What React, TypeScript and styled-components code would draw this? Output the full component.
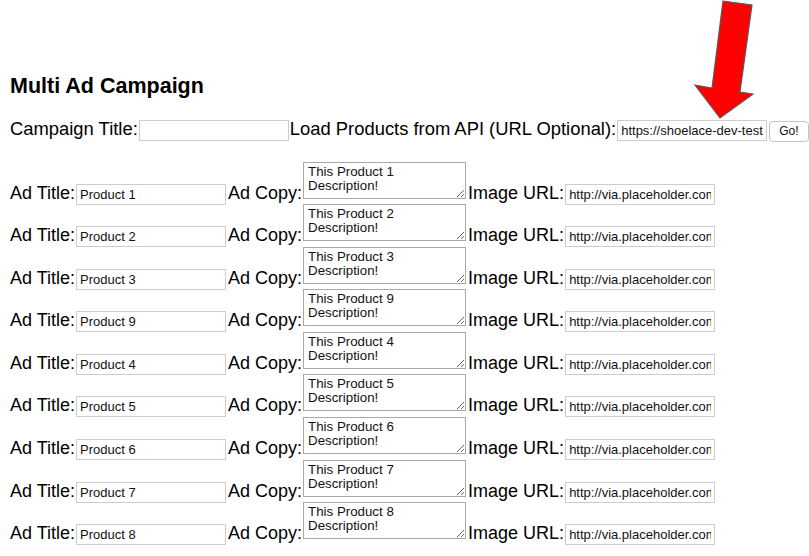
import React from 'react'
import styled, { createGlobalStyle } from 'styled-components'

const GlobalStyle = createGlobalStyle`
  html, body {
    margin: 0;
    padding: 0;
    background: #ffffff;
  }
  body {
    font-family: "Liberation Sans", Arial, Helvetica, sans-serif;
    color: #000000;
  }
`

const Page = styled.div`
  position: relative;
  width: 809px;
  height: 556px;
  overflow: hidden;
  padding: 73px 0 0 10px;
  box-sizing: border-box;
`

const Heading = styled.h3`
  margin: 0;
  font-size: 21.5px;
  line-height: 26px;
  font-weight: bold;
`

const TopRow = styled.div`
  margin-top: 19px;
  font-size: 18.4px;
  white-space: nowrap;
`

const AdList = styled.div`
  margin-top: 20px;
`

const AdRow = styled.div`
  height: 42.6px;
  font-size: 18px;
  white-space: nowrap;
`

const TextInput = styled.input<{ $gap?: number }>`
  box-sizing: border-box;
  width: 150px;
  height: 21px;
  margin: 0 ${(p) => p.$gap ?? 2}px 0 1px;
  padding: 0 3px;
  border: 1px solid #cdcdcd;
  font-family: "Liberation Sans", Arial, Helvetica, sans-serif;
  font-size: 13px;
  color: #111;
  background: #fff;
  outline: none;
  vertical-align: baseline;
`

const CopyArea = styled.textarea`
  box-sizing: border-box;
  width: 163px;
  height: 37px;
  margin: 0 2px 0 1px;
  padding: 2px 4px;
  border: 1px solid #a9a9a9;
  font-family: "Liberation Sans", Arial, Helvetica, sans-serif;
  font-size: 13.3px;
  line-height: 14px;
  color: #111;
  background: #fff;
  overflow: hidden;
  vertical-align: baseline;
`

const GoButton = styled.button`
  box-sizing: border-box;
  height: 21px;
  margin-left: 1px;
  padding: 0 9px;
  border: 1px solid #c4c4c4;
  border-radius: 4px;
  background: #fff;
  font-family: "Liberation Sans", Arial, Helvetica, sans-serif;
  font-size: 12px;
  color: #111;
  vertical-align: baseline;
`

const Arrow = styled.svg`
  position: absolute;
  top: 0;
  left: 690px;
`

const products = ['1', '2', '3', '9', '4', '5', '6', '7', '8']

export default function App() {
  return (
    <>
      <GlobalStyle />
      <Page>
        <Heading>Multi Ad Campaign</Heading>
        <TopRow>
          Campaign Title:
          <TextInput type="text" defaultValue="" $gap={1} />
          Load Products from API (URL Optional):
          <TextInput type="text" defaultValue="https://shoelace-dev-test.myshopify.com/products.json" $gap={1} />
          <GoButton>Go!</GoButton>
        </TopRow>
        <AdList>
          {products.map((n) => (
            <AdRow key={n}>
              Ad Title:
              <TextInput type="text" defaultValue={`Product ${n}`} />
              Ad Copy:
              <CopyArea defaultValue={`This Product ${n}\nDescription!`} />
              Image URL:
              <TextInput type="text" defaultValue="http://via.placeholder.com/350x150" />
            </AdRow>
          ))}
        </AdList>
        <Arrow width="70" height="122" viewBox="690 0 70 122">
          <polygon
            points="723,1 752,5 740,92 753,94 720,118 695,85 712,88"
            fill="#ff0000"
            stroke="#5a5a5a"
            strokeWidth="1.2"
            strokeLinejoin="miter"
          />
        </Arrow>
      </Page>
    </>
  )
}
